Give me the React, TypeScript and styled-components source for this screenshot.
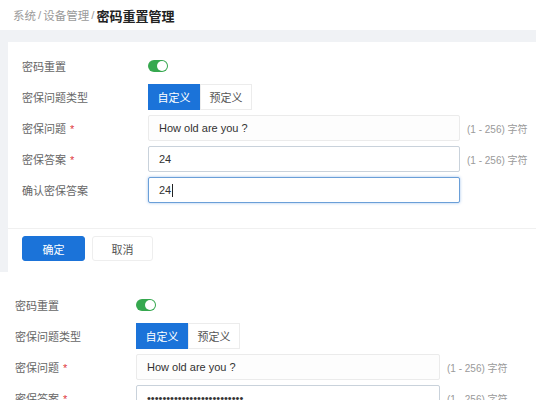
import React from "react";
import styled, { createGlobalStyle } from "styled-components";

const GlobalStyle = createGlobalStyle`
  html, body {
    margin: 0;
    padding: 0;
    background: #ffffff;
  }
  body {
    font-family: "Liberation Sans", "Noto Sans CJK SC", sans-serif;
    color: #333;
  }
`;

const Page = styled.div`
  width: 536px;
  height: 400px;
  overflow: hidden;
  background: #f0f2f5;
`;

const Header = styled.div`
  height: 30px;
  background: #ffffff;
  display: flex;
  align-items: center;
  padding-left: 13px;
  font-size: 11.5px;
  color: #9a9a9a;
`;

const Sep = styled.span`
  margin: 0 2px;
`;

const Current = styled.span`
  font-size: 13px;
  font-weight: 700;
  color: #222;
`;

const Main = styled.div`
  padding: 12px 0 0 8px;
`;

const Card = styled.div`
  background: #ffffff;
  height: 230px;
  box-sizing: border-box;
`;

const Form = styled.div<{ $pad: number; $top: number }>`
  display: flex;
  flex-direction: column;
  gap: 5px;
  padding: ${({ $top }) => $top}px 0 0 ${({ $pad }) => $pad}px;
`;

const Row = styled.div`
  display: flex;
  align-items: center;
  height: 26px;
`;

const Label = styled.div<{ $w: number; $size: number }>`
  width: ${({ $w }) => $w}px;
  flex: none;
  font-size: ${({ $size }) => $size}px;
  color: #666;
`;

const Star = styled.span`
  color: #e0383e;
  margin-left: 4px;
`;

const Toggle = styled.div`
  width: 20px;
  height: 12px;
  border-radius: 6px;
  background: #36a84f;
  display: flex;
  align-items: center;
  justify-content: flex-end;
  padding: 0 1px;
  box-sizing: border-box;
`;

const Knob = styled.div`
  width: 10px;
  height: 10px;
  border-radius: 50%;
  background: #ffffff;
`;

const Segment = styled.div`
  display: flex;
  height: 26px;
`;

const SegButton = styled.div<{ $active?: boolean; $size: number }>`
  width: 52px;
  display: flex;
  align-items: center;
  justify-content: center;
  font-size: ${({ $size }) => $size}px;
  box-sizing: border-box;
  background: ${({ $active }) => ($active ? "#1b73d9" : "#ffffff")};
  color: ${({ $active }) => ($active ? "#ffffff" : "#555")};
  border: 1px solid ${({ $active }) => ($active ? "#1b73d9" : "#ececec")};
`;

const Field = styled.div<{
  $w: number;
  $variant: "readonly" | "normal" | "focus";
  $size: number;
}>`
  width: ${({ $w }) => $w}px;
  height: 26px;
  box-sizing: border-box;
  display: flex;
  align-items: center;
  padding-left: 10px;
  font-size: ${({ $size }) => $size}px;
  color: #333;
  border-radius: 2px;
  background: ${({ $variant }) => ($variant === "readonly" ? "#fdfdfd" : "#ffffff")};
  border: 1px solid
    ${({ $variant }) =>
      $variant === "focus" ? "#6a9fd8" : $variant === "normal" ? "#c9d2db" : "#ebebeb"};
  box-shadow: ${({ $variant }) =>
    $variant === "focus" ? "0 0 3px rgba(40, 115, 210, 0.45)" : "none"};
`;

const Caret = styled.span`
  display: inline-block;
  width: 1px;
  height: 13px;
  background: #222;
  margin-left: 1px;
`;

const Dots = styled.span`
  font-size: 11px;
  color: #333;
`;

const Hint = styled.div<{ $size: number }>`
  margin-left: 7px;
  font-size: ${({ $size }) => $size}px;
  color: #9a9a9a;
  white-space: nowrap;
`;

const Divider = styled.div`
  height: 1px;
  background: #f0f0f0;
  margin-top: 25px;
`;

const Footer = styled.div`
  display: flex;
  gap: 7px;
  padding: 7px 0 0 14px;
`;

const Button = styled.div<{ $primary?: boolean }>`
  width: ${({ $primary }) => ($primary ? 63 : 61)}px;
  height: 25px;
  border-radius: 3px;
  display: flex;
  align-items: center;
  justify-content: center;
  font-size: 11px;
  box-sizing: border-box;
  background: ${({ $primary }) => ($primary ? "#1b73d9" : "#ffffff")};
  color: ${({ $primary }) => ($primary ? "#ffffff" : "#555")};
  border: 1px solid ${({ $primary }) => ($primary ? "#1b73d9" : "#eeeeee")};
`;

const Lower = styled.div`
  background: #ffffff;
  height: 128px;
`;

type Cfg = { pad: number; top: number; labelW: number; fieldW: number; size: number };

const ResetForm = ({ cfg, confirm }: { cfg: Cfg; confirm: boolean }) => (
  <Form $pad={cfg.pad} $top={cfg.top}>
    <Row>
      <Label $w={cfg.labelW} $size={cfg.size}>密码重置</Label>
      <Toggle>
        <Knob />
      </Toggle>
    </Row>
    <Row>
      <Label $w={cfg.labelW} $size={cfg.size}>密保问题类型</Label>
      <Segment>
        <SegButton $active $size={cfg.size}>自定义</SegButton>
        <SegButton $size={cfg.size}>预定义</SegButton>
      </Segment>
    </Row>
    <Row>
      <Label $w={cfg.labelW} $size={cfg.size}>
        密保问题<Star>*</Star>
      </Label>
      <Field $w={cfg.fieldW} $variant="readonly" $size={cfg.size}>
        How old are you ?
      </Field>
      <Hint $size={cfg.size - 1}>(1 - 256) 字符</Hint>
    </Row>
    <Row>
      <Label $w={cfg.labelW} $size={cfg.size}>
        密保答案<Star>*</Star>
      </Label>
      <Field $w={cfg.fieldW} $variant="normal" $size={cfg.size}>
        {confirm ? "24" : <Dots>{"•".repeat(25)}</Dots>}
      </Field>
      <Hint $size={cfg.size - 1}>(1 - 256) 字符</Hint>
    </Row>
    {confirm && (
      <Row>
        <Label $w={cfg.labelW} $size={cfg.size}>确认密保答案</Label>
        <Field $w={cfg.fieldW} $variant="focus" $size={cfg.size}>
          24
          <Caret />
        </Field>
      </Row>
    )}
  </Form>
);

export default function App() {
  return (
    <>
      <GlobalStyle />
      <Page>
        <Header>
          系统<Sep>/</Sep>设备管理<Sep>/</Sep>
          <Current>密码重置管理</Current>
        </Header>
        <Main>
          <Card>
            <ResetForm
              cfg={{ pad: 14, top: 11, labelW: 126, fieldW: 312, size: 11 }}
              confirm
            />
            <Divider />
            <Footer>
              <Button $primary>确定</Button>
              <Button>取消</Button>
            </Footer>
          </Card>
        </Main>
        <Lower>
          <ResetForm
            cfg={{ pad: 15, top: 20, labelW: 121, fieldW: 304, size: 11 }}
            confirm={false}
          />
        </Lower>
      </Page>
    </>
  );
}
